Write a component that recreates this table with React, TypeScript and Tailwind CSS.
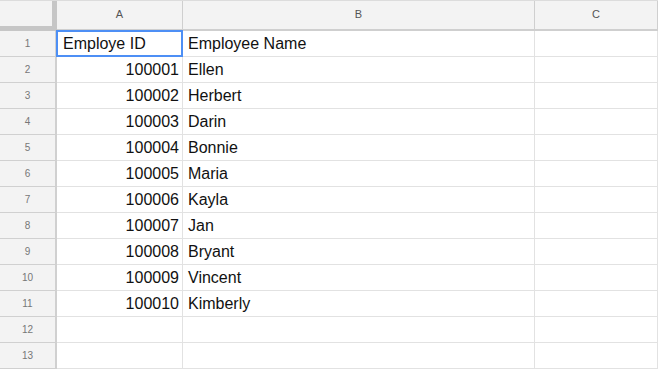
import React from "react";

const rows: [string, string][] = [
  ["Employe ID", "Employee Name"],
  ["100001", "Ellen"],
  ["100002", "Herbert"],
  ["100003", "Darin"],
  ["100004", "Bonnie"],
  ["100005", "Maria"],
  ["100006", "Kayla"],
  ["100007", "Jan"],
  ["100008", "Bryant"],
  ["100009", "Vincent"],
  ["100010", "Kimberly"],
  ["", ""],
  ["", ""],
];

const App = () => {
  return (
    <div
      className="w-[660px] h-[375px] bg-white overflow-hidden"
      style={{ fontFamily: '"Liberation Sans", Arial, sans-serif' }}
    >
      <div className="w-[658px]">
        {/* column headers */}
        <div className="flex h-[31px] border-t border-[#dcdcdc]">
          <div className="w-[57px] shrink-0 bg-[#f3f3f3] border-r-[5px] border-b-[5px] border-[#c6c6c6]" />
          {["A", "B", "C"].map((c, i) => (
            <div
              key={c}
              className={`${
                i === 0 ? "w-[126px]" : i === 1 ? "w-[352px]" : "w-[123px]"
              } shrink-0 bg-[#f3f3f3] border-r border-b-2 border-[#cfcfcf] flex items-center justify-center text-[11px] text-[#555] pb-[2px]`}
            >
              {c}
            </div>
          ))}
        </div>

        {rows.map(([id, name], i) => (
          <div key={i} className="flex h-[26px]">
            <div className="w-[57px] shrink-0 bg-[#f3f3f3] border-r-2 border-b border-[#d0d0d0] flex items-center justify-center text-[10px] text-[#777]">
              {i + 1}
            </div>
            <div className="relative w-[126px] shrink-0 border-r border-b border-[#e2e2e2] flex items-center text-[16px] text-[#111]">
              <span className={`w-full ${i === 0 ? "text-left pl-[6px]" : "text-right pr-[3px]"}`}>{id}</span>
              {i === 0 && (
                <div className="absolute -left-[1px] -top-[1px] -right-[1px] -bottom-[1px] border-2 border-[#4d8ff5]" />
              )}
            </div>
            <div className="w-[352px] shrink-0 border-r border-b border-[#e2e2e2] flex items-center px-[5px] text-[16px] text-[#111]">
              {name}
            </div>
            <div className="w-[123px] shrink-0 border-r border-b border-[#e2e2e2]" />
          </div>
        ))}
      </div>
    </div>
  );
};

export default App;
